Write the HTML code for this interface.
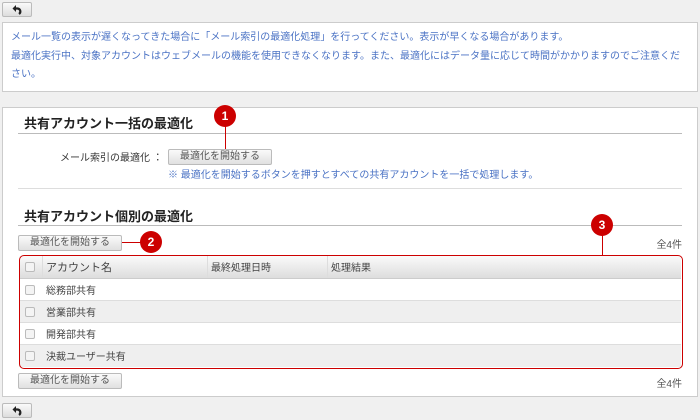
<!DOCTYPE html><html><head><meta charset="utf-8"><style>
*{box-sizing:border-box;margin:0;padding:0}
body{width:700px;height:420px;background:#f0f0f0;font-family:"Liberation Sans","Noto Sans CJK JP",sans-serif;font-size:10px;color:#444;position:relative;overflow:hidden}
.a{position:absolute}
.back{width:30px;height:15px;border:1px solid #bbb;border-radius:2px;background:linear-gradient(#fafafa,#ddd)}
.btn{width:104px;height:16px;border:1px solid #bbb;border-radius:2px;background:linear-gradient(#fafafa,#e0e0e0);font-size:10px;color:#555;text-align:center;line-height:14px}
.box{background:#fff;border:1px solid #ccc}
.info{color:#4a72c4;font-size:10px;line-height:18.5px;padding:6px 8px}
h2{position:absolute;font-size:13px;font-weight:bold;color:#222}
.hr{position:absolute;height:1px;background:#bbb}
.badge{position:absolute;width:22px;height:22px;border-radius:50%;background:#c00;color:#fff;font-weight:bold;font-size:12px;text-align:center;line-height:22px}
.row{position:absolute;left:19px;width:662px;height:22px;border-bottom:1px solid #ddd}
.cb{position:absolute;left:6px;top:6px;width:10px;height:10px;border:1px solid #bbb;border-radius:2px;background:#f4f4f4}
.row span{position:absolute;top:3px}
</style></head><body>
<div class="a back" style="left:2px;top:2px"><svg width="28" height="13" viewBox="0 0 28 13"><path d="M12 5.5h2.5a3 3 0 0 1 1.5 5.5" stroke="#222" stroke-width="2.2" fill="none"/><path d="M9.5 5.5l3.5-3.5v7z" fill="#222"/></svg></div>
<div class="a box info" style="left:2px;top:22px;width:696px;height:70px">メール一覧の表示が遅くなってきた場合に「メール索引の最適化処理」を行ってください。表示が早くなる場合があります。<br>最適化実行中、対象アカウントはウェブメールの機能を使用できなくなります。また、最適化にはデータ量に応じて時間がかかりますのでご注意ください。</div>
<div class="a box" style="left:2px;top:107px;width:696px;height:290px"></div>
<h2 style="left:24px;top:113px">共有アカウント一括の最適化</h2>
<div class="hr" style="left:18px;top:133px;width:664px"></div>
<div class="a" style="left:60px;top:149px;font-size:10px;color:#333">メール索引の最適化 ：</div>
<div class="a btn" style="left:168px;top:149px">最適化を開始する</div>
<div class="a" style="left:168px;top:166px;color:#4a72c4;font-size:10px">※ 最適化を開始するボタンを押すとすべての共有アカウントを一括で処理します。</div>
<div class="hr" style="left:18px;top:188px;width:664px;background:#ddd"></div>
<h2 style="left:24px;top:206px">共有アカウント個別の最適化</h2>
<div class="hr" style="left:18px;top:225px;width:664px"></div>
<div class="a btn" style="left:18px;top:235px">最適化を開始する</div>
<div class="a" style="left:122px;top:242px;width:20px;height:1px;background:#c00"></div>
<div class="a" style="right:18px;top:236px;color:#555">全4件</div>
<div class="row" style="top:256px;height:23px;background:linear-gradient(#fafafa,#ddd);border-bottom:1px solid #ccc"><div class="cb"></div><span style="left:27px;font-size:11px">アカウント名</span><span style="left:192px">最終処理日時</span><span style="left:312px">処理結果</span><div class="a" style="left:23px;top:0;width:1px;height:22px;background:#ddd"></div><div class="a" style="left:188px;top:0;width:1px;height:22px;background:#ddd"></div><div class="a" style="left:308px;top:0;width:1px;height:22px;background:#ddd"></div></div>
<div class="row" style="top:279px;background:#fff"><div class="cb"></div><span style="left:27px">総務部共有</span></div>
<div class="row" style="top:301px;background:#efefef"><div class="cb"></div><span style="left:27px">営業部共有</span></div>
<div class="row" style="top:323px;background:#fff"><div class="cb"></div><span style="left:27px">開発部共有</span></div>
<div class="row" style="top:345px;background:#efefef;border:0"><div class="cb"></div><span style="left:27px">決裁ユーザー共有</span></div>
<div class="a" style="left:19px;top:255px;width:664px;height:114px;border:1.5px solid #c00;border-radius:5px"></div>
<div class="a btn" style="left:18px;top:373px">最適化を開始する</div>
<div class="a" style="right:18px;top:375px;color:#555">全4件</div>
<div class="a" style="left:225px;top:124px;width:1px;height:25px;background:#c00"></div>
<div class="badge" style="left:214px;top:105px">1</div>
<div class="badge" style="left:140px;top:231px">2</div>
<div class="a" style="left:602px;top:230px;width:1px;height:25px;background:#c00"></div>
<div class="badge" style="left:591px;top:214px">3</div>
<div class="a back" style="left:2px;top:403px"><svg width="28" height="13" viewBox="0 0 28 13"><path d="M12 5.5h2.5a3 3 0 0 1 1.5 5.5" stroke="#222" stroke-width="2.2" fill="none"/><path d="M9.5 5.5l3.5-3.5v7z" fill="#222"/></svg></div>
</body></html>
